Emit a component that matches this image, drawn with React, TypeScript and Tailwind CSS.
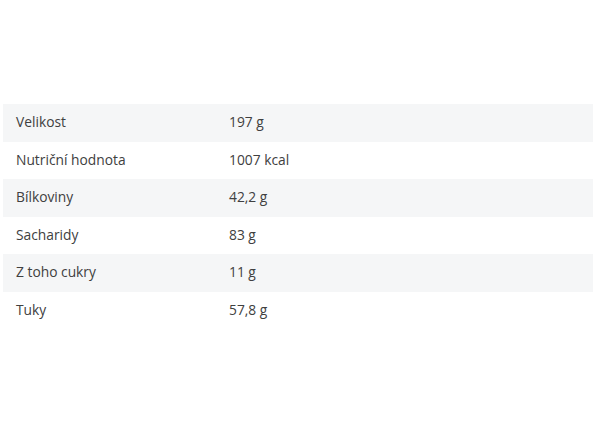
import React from "react";

const rows: [string, string][] = [
  ["Velikost", "197 g"],
  ["Nutriční hodnota", "1007 kcal"],
  ["Bílkoviny", "42,2 g"],
  ["Sacharidy", "83 g"],
  ["Z toho cukry", "11 g"],
  ["Tuky", "57,8 g"],
];

export default function App() {
  return (
    <div className="w-[600px] h-[440px] bg-white pt-[104px] pl-[3px] pr-[7px]" style={{ fontFamily: '"Open Sans", sans-serif' }}>
      <div className="flex flex-col">
        {rows.map(([k, v], i) => (
          <div
            key={k}
            className={`flex items-center h-[37.5px] text-[13.8px] text-[#404040] ${i % 2 === 0 ? "bg-[#f5f6f7]" : "bg-white"}`}
          >
            <div className="w-[226px] pl-[13px]">{k}</div>
            <div>{v}</div>
          </div>
        ))}
      </div>
    </div>
  );
}
